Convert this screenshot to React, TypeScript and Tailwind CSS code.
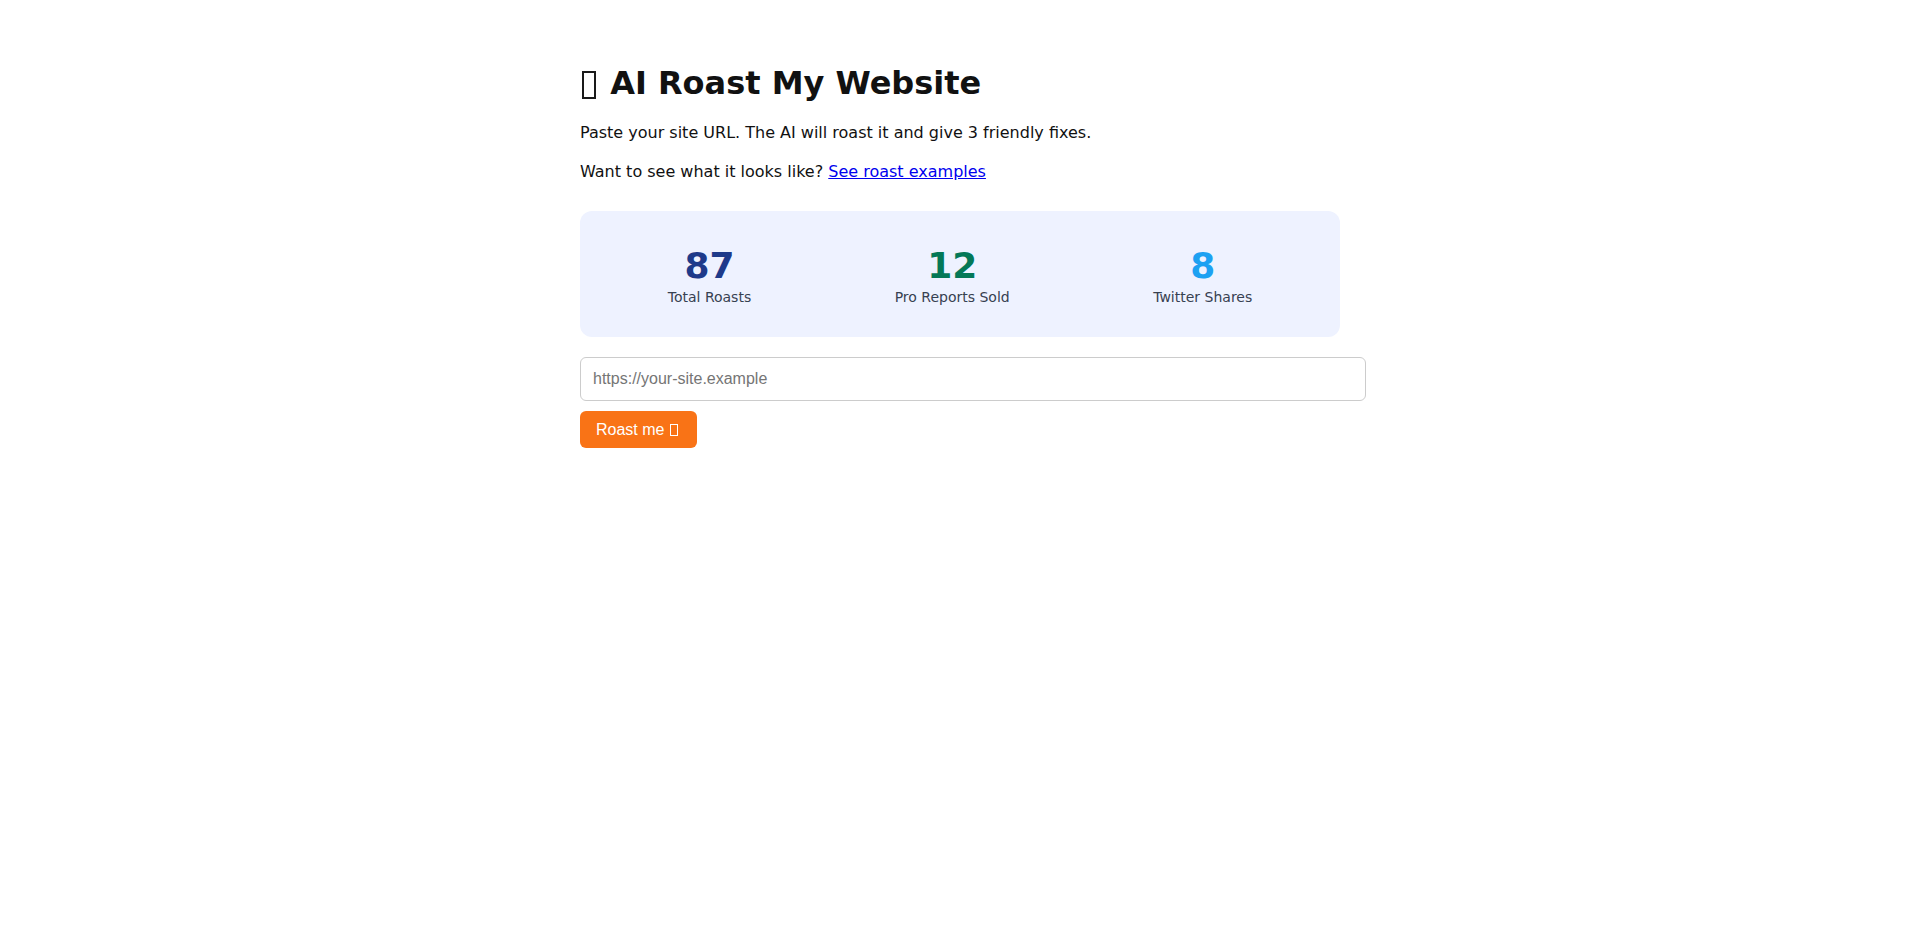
import React from "react";

const stats = [
  { value: "87", label: "Total Roasts", color: "text-[#1e3a8a]" },
  { value: "12", label: "Pro Reports Sold", color: "text-[#047857]" },
  { value: "8", label: "Twitter Shares", color: "text-[#1da1f2]" },
];

// the reference has no emoji font, so the fire emoji shows as a missing-glyph box
function Tofu({ className }: { className: string }) {
  return <span aria-hidden className={`inline-block ${className}`} />;
}

export default function App() {
  return (
    <div className="min-h-screen bg-white font-['DejaVu_Sans',sans-serif] text-[#111]">
      <div className="mx-auto w-[760px] pt-[65px]">
        <h1 className="text-[32px] font-bold leading-[37px]">
          <Tofu className="ml-[2px] mr-[3px] h-[28px] w-[14px] border-2 border-[#1a1a1a] align-[-5px]" />{" "}
          AI Roast My Website
        </h1>
        <p className="mt-[22px] text-base leading-[18.6px]">
          Paste your site URL. The AI will roast it and give 3 friendly fixes.
        </p>
        <p className="mt-[20px] text-base leading-[18.6px]">
          Want to see what it looks like?{" "}
          <a href="#" className="text-[#0000ee] underline">
            See roast examples
          </a>
        </p>

        <div className="mt-[30px] flex h-[126px] justify-around rounded-xl bg-[#eef2ff] px-4 pt-[34px]">
          {stats.map((s) => (
            <div key={s.label} className="flex flex-col items-center">
              <div className={`text-[36px] font-bold leading-[42px] ${s.color}`}>{s.value}</div>
              <div className="mt-[2px] text-sm leading-[16px] text-[#374151]">{s.label}</div>
            </div>
          ))}
        </div>

        <input
          type="text"
          placeholder="https://your-site.example"
          className="mt-[20px] block h-[44px] w-[786px] rounded-md border border-[#ccc] px-3 font-['Liberation_Sans',Arial,sans-serif] text-base text-[#111] placeholder:text-[#757575] focus:outline-none"
        />
        <button
          type="button"
          className="mt-[10px] flex h-[37px] items-center rounded-md bg-[#f97316] px-4 font-['Liberation_Sans',Arial,sans-serif] text-base text-white"
        >
          Roast me&nbsp;
          <Tofu className="ml-[1px] mr-[3px] h-[12px] w-[8px] border border-white" />
        </button>
      </div>
    </div>
  );
}
